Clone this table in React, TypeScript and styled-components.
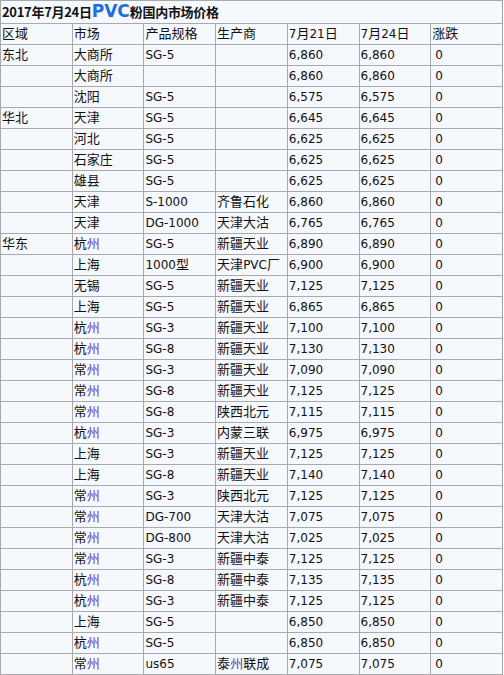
import React from "react";
import styled, { createGlobalStyle } from "styled-components";

const GlobalStyle = createGlobalStyle`
  html, body {
    margin: 0;
    padding: 0;
    background: #ffffff;
  }
`;

const PriceTable = styled.table`
  width: 503px;
  table-layout: fixed;
  border-collapse: collapse;
  background: #f5f8fd;
  font-family: "DejaVu Sans", "Noto Sans CJK SC", sans-serif;
  font-size: 12px;
  color: #111;
`;

const TitleCell = styled.td`
  padding: 0 0 0 1px;
  border: 1px solid #a9a9a9;
  vertical-align: middle;
`;

const TitleText = styled.div`
  height: 22px;
  line-height: 22px;
  font-family: "Noto Sans CJK SC", sans-serif;
  font-weight: bold;
  font-size: 13px;
  letter-spacing: -0.3px;
  white-space: nowrap;
  overflow: hidden;
`;

const Accent = styled.span`
  color: #1d6fe0;
  font-family: "DejaVu Sans", sans-serif;
  font-size: 17px;
  letter-spacing: 0;
  line-height: 1;
`;

const Cell = styled.td<{ $pad?: number }>`
  padding: 0 0 0 ${(p) => p.$pad ?? 1}px;
  border: 1px solid #a9a9a9;
  vertical-align: middle;
`;

const CellText = styled.div`
  height: 20px;
  line-height: 20px;
  white-space: nowrap;
  overflow: hidden;
`;

const Han = styled.span`
  font-family: "Noto Sans CJK SC", sans-serif;
  font-size: 13px;
  line-height: 1;
`;

const Zhou = styled.span`
  color: #6b3a9e;
`;

// Chinese text gets the CJK face; 州 shows in link purple like the source
const Text = ({ v }: { v: string }) => {
  if (!v) return null;
  const parts = v.split(/([\u4e00-\u9fff]+)/).filter(Boolean);
  return (
    <>
      {parts.map((p, i) =>
        /[\u4e00-\u9fff]/.test(p) ? (
          <Han key={i}>
            {p.split(/(州)/).map((s, j) =>
              s === "州" ? <Zhou key={j}>州</Zhou> : s
            )}
          </Han>
        ) : (
          <span key={i}>{p}</span>
        )
      )}
    </>
  );
};

const header = ["区域", "市场", "产品规格", "生产商", "7月21日", "7月24日", "涨跌"];

const rows: string[][] = [
  ["东北", "大商所", "SG-5", "", "6,860", "6,860"],
  ["", "大商所", "", "", "6,860", "6,860"],
  ["", "沈阳", "SG-5", "", "6,575", "6,575"],
  ["华北", "天津", "SG-5", "", "6,645", "6,645"],
  ["", "河北", "SG-5", "", "6,625", "6,625"],
  ["", "石家庄", "SG-5", "", "6,625", "6,625"],
  ["", "雄县", "SG-5", "", "6,625", "6,625"],
  ["", "天津", "S-1000", "齐鲁石化", "6,860", "6,860"],
  ["", "天津", "DG-1000", "天津大沽", "6,765", "6,765"],
  ["华东", "杭州", "SG-5", "新疆天业", "6,890", "6,890"],
  ["", "上海", "1000型", "天津PVC厂", "6,900", "6,900"],
  ["", "无锡", "SG-5", "新疆天业", "7,125", "7,125"],
  ["", "上海", "SG-5", "新疆天业", "6,865", "6,865"],
  ["", "杭州", "SG-3", "新疆天业", "7,100", "7,100"],
  ["", "杭州", "SG-8", "新疆天业", "7,130", "7,130"],
  ["", "常州", "SG-3", "新疆天业", "7,090", "7,090"],
  ["", "常州", "SG-8", "新疆天业", "7,125", "7,125"],
  ["", "常州", "SG-8", "陕西北元", "7,115", "7,115"],
  ["", "杭州", "SG-3", "内蒙三联", "6,975", "6,975"],
  ["", "上海", "SG-3", "新疆天业", "7,125", "7,125"],
  ["", "上海", "SG-8", "新疆天业", "7,140", "7,140"],
  ["", "常州", "SG-3", "陕西北元", "7,125", "7,125"],
  ["", "常州", "DG-700", "天津大沽", "7,075", "7,075"],
  ["", "常州", "DG-800", "天津大沽", "7,025", "7,025"],
  ["", "常州", "SG-3", "新疆中泰", "7,125", "7,125"],
  ["", "杭州", "SG-8", "新疆中泰", "7,135", "7,135"],
  ["", "杭州", "SG-3", "新疆中泰", "7,125", "7,125"],
  ["", "上海", "SG-5", "", "6,850", "6,850"],
  ["", "杭州", "SG-5", "", "6,850", "6,850"],
  ["", "常州", "us65", "泰州联成", "7,075", "7,075"],
];

export default function App() {
  return (
    <>
      <GlobalStyle />
      <PriceTable>
        <tbody>
          <tr>
            <TitleCell colSpan={7}>
              <TitleText>
                2017年7月24日<Accent>PVC</Accent>粉国内市场价格
              </TitleText>
            </TitleCell>
          </tr>
          <tr>
            {header.map((h) => (
              <Cell key={h}>
                <CellText>
                  <Text v={h} />
                </CellText>
              </Cell>
            ))}
          </tr>
          {rows.map((r, i) => (
            <tr key={i}>
              {r.map((c, j) => (
                <Cell key={j}>
                  <CellText>
                    <Text v={c} />
                  </CellText>
                </Cell>
              ))}
              <Cell $pad={4}>
                <CellText>0</CellText>
              </Cell>
            </tr>
          ))}
        </tbody>
      </PriceTable>
    </>
  );
}
